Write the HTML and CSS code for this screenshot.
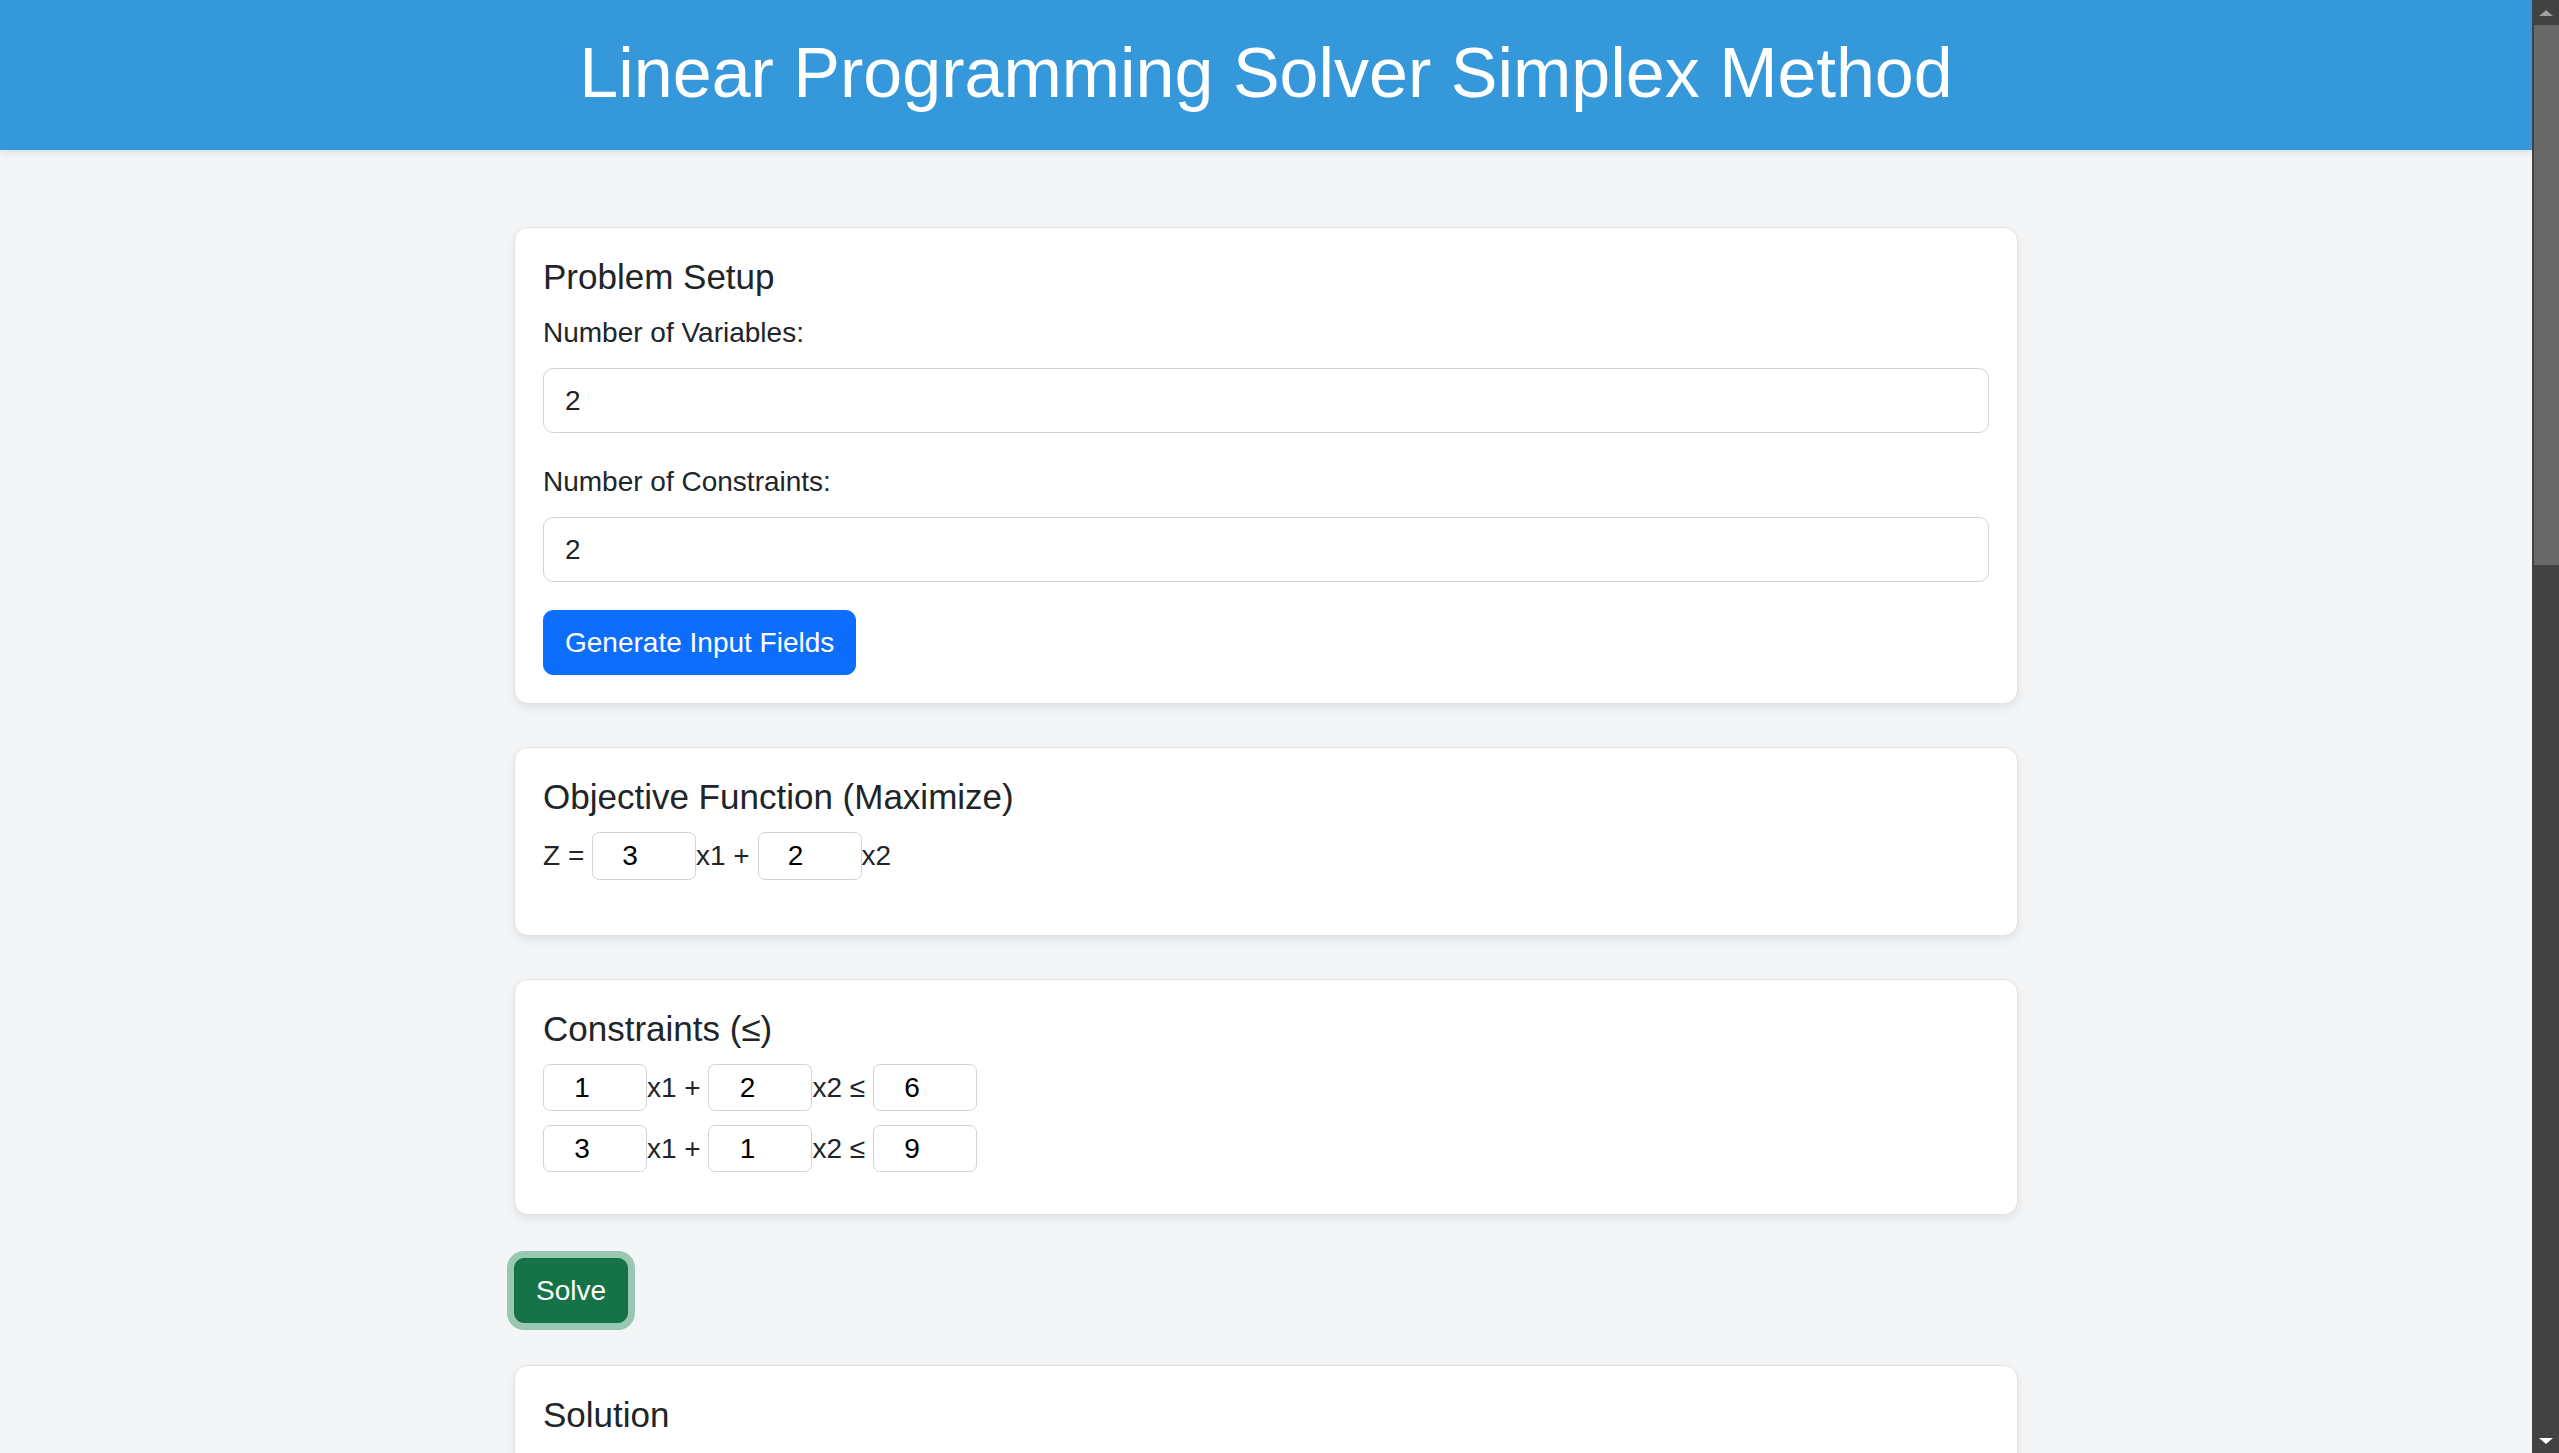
FILE: index.html
```html
<!DOCTYPE html>
<html lang="en">
<head>
<meta charset="utf-8">
<title>Linear Programming Solver Simplex Method</title>
<link rel="stylesheet" href="styles.css">
</head>
<body>
<div class="app">
  <div class="viewport">
    <header class="site-header">
      <h1 class="site-title">Linear Programming Solver Simplex Method</h1>
    </header>
    <main class="container">
      <section class="card">
        <h5 class="card-title">Problem Setup</h5>
        <div class="form-group">
          <label class="form-label" for="numVars">Number of Variables:</label>
          <input class="form-control" id="numVars" type="text" value="2">
        </div>
        <div class="form-group">
          <label class="form-label" for="numCons">Number of Constraints:</label>
          <input class="form-control" id="numCons" type="text" value="2">
        </div>
        <button class="btn btn-primary" type="button">Generate Input Fields</button>
      </section>

      <section class="card">
        <h5 class="card-title">Objective Function (Maximize)</h5>
        <div class="eq-row eq-objective">
          <span class="term">Z =&nbsp;</span><input class="coef" type="text" value="3"><span class="term">x1 +&nbsp;</span><input class="coef" type="text" value="2"><span class="term">x2</span>
        </div>
      </section>

      <section class="card">
        <h5 class="card-title">Constraints (≤)</h5>
        <div class="eq-row eq-constraint">
          <input class="coef" type="text" value="1"><span class="term">x1 +&nbsp;</span><input class="coef" type="text" value="2"><span class="term">x2 ≤&nbsp;</span><input class="coef" type="text" value="6">
        </div>
        <div class="eq-row eq-constraint">
          <input class="coef" type="text" value="3"><span class="term">x1 +&nbsp;</span><input class="coef" type="text" value="1"><span class="term">x2 ≤&nbsp;</span><input class="coef" type="text" value="9">
        </div>
      </section>

      <div class="solve-wrap">
        <button class="btn btn-success is-focused" type="button">Solve</button>
      </div>

      <section class="card solution-card">
        <h5 class="card-title">Solution</h5>
      </section>
    </main>
  </div>
  <div class="scrollbar" aria-hidden="true">
    <div class="sb-btn"><span class="sb-arrow-up"></span></div>
    <div class="sb-thumb"></div>
    <div class="sb-track"></div>
    <div class="sb-btn"><span class="sb-arrow-down"></span></div>
  </div>
</div>
</body>
</html>
```
FILE: styles.css
```css
html,
body {
  height: 100%;
}

body {
  margin: 0;
  overflow: hidden;
  background: #f4f5f7;
  color: #212529;
  font-family: "Liberation Sans", Arial, sans-serif;
  font-size: 28px;
  line-height: 1.5;
}

.app {
  display: flex;
  height: 100vh;
}

.viewport {
  flex: 1;
  min-width: 0;
  overflow: hidden;
}

.scrollbar {
  width: 27px;
  flex: 0 0 27px;
  display: flex;
  flex-direction: column;
  background: #424242;
}

.sb-btn {
  height: 25px;
  flex: 0 0 25px;
  display: flex;
  align-items: center;
  justify-content: center;
}

.sb-arrow-up {
  width: 0;
  height: 0;
  border-left: 7px solid transparent;
  border-right: 7px solid transparent;
  border-bottom: 6px solid #a0a0a0;
}

.sb-arrow-down {
  width: 0;
  height: 0;
  border-left: 7px solid transparent;
  border-right: 7px solid transparent;
  border-top: 6px solid #ffffff;
}

.sb-thumb {
  height: 540px;
  flex: 0 0 540px;
  margin-left: 2px;
  background: #686868;
}

.sb-track {
  flex: 1;
}

.site-header {
  height: 150px;
  box-sizing: border-box;
  padding-top: 31px;
  background: #3498db;
  color: #ffffff;
  text-align: center;
  box-shadow: 0 2px 8px rgba(0, 0, 0, 0.1);
}

.site-title {
  margin: 0;
  font-size: 70px;
  font-weight: 400;
  line-height: 84px;
}

.container {
  width: 1504px;
  margin: 77px auto 0;
}

.card {
  background: #ffffff;
  border: 1px solid #e2e3e5;
  border-radius: 14px;
  box-shadow: 0 4px 10px rgba(0, 0, 0, 0.08);
  padding: 28px;
  margin-bottom: 43px;
}

.card-title {
  margin: 0 0 14px;
  font-size: 35px;
  font-weight: 400;
  line-height: 42px;
}

.form-group {
  margin-bottom: 28px;
}

.form-label {
  display: block;
  margin-bottom: 14px;
  line-height: 42px;
}

.form-control {
  display: block;
  width: 100%;
  height: 65px;
  box-sizing: border-box;
  padding: 0 21px;
  border: 1px solid #ced4da;
  border-radius: 10px;
  background: #ffffff;
  color: #212529;
  font-family: inherit;
  font-size: 28px;
  outline: none;
}

.btn {
  height: 65px;
  box-sizing: border-box;
  padding: 0 21px;
  border: 1px solid transparent;
  border-radius: 10px;
  color: #ffffff;
  font-family: inherit;
  font-size: 28px;
  line-height: 1.5;
  cursor: pointer;
}

.btn-primary {
  background: #0d6efd;
  border-color: #0d6efd;
}

.btn-success {
  background: #157347;
  border-color: #146c43;
}

.btn-success.is-focused {
  box-shadow: 0 0 0 7px rgba(60, 153, 110, 0.5);
}

.eq-row {
  display: flex;
  align-items: center;
}

.eq-objective {
  margin-bottom: 27px;
}

.eq-constraint {
  margin-bottom: 14px;
}

.term {
  white-space: pre;
  line-height: 42px;
}

.coef {
  width: 104px;
  height: 47px;
  box-sizing: border-box;
  padding: 0 30px 0 4px;
  border: 1px solid #d0d4da;
  border-radius: 7px;
  background: #ffffff;
  color: #000000;
  font-family: inherit;
  font-size: 28px;
  text-align: center;
  outline: none;
}

.eq-objective .coef {
  height: 48px;
  padding-right: 32px;
}

.solve-wrap {
  margin-bottom: 42px;
}

.solution-card {
  min-height: 600px;
  box-sizing: border-box;
}
```
